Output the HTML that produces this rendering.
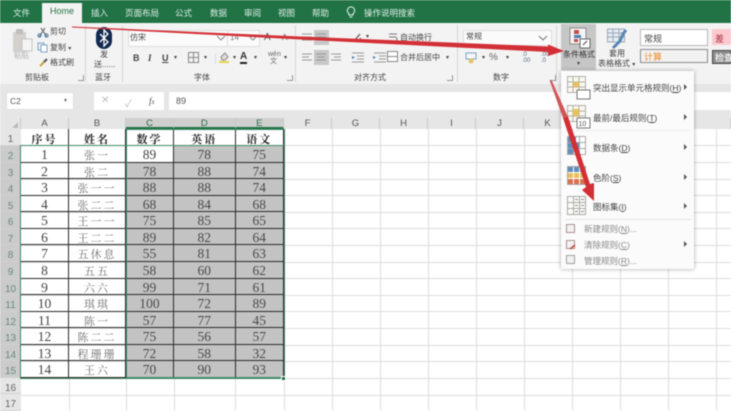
<!DOCTYPE html>
<html lang="zh">
<head>
<meta charset="utf-8">
<style>
html,body{margin:0;padding:0;background:#fff}
#p{position:relative;width:731px;height:411px;overflow:hidden;background:#fff;font-family:"Liberation Sans","Noto Sans CJK SC",sans-serif;color:#444;filter:blur(.55px)}
.a{position:absolute;white-space:nowrap}
.t{font-size:8px;line-height:10px}
.h{position:absolute;top:118px;height:11px;line-height:12px;font-size:9.5px;text-align:center;color:#555;background:#e6e6e6;border-right:1px solid #c8c8c8;box-sizing:border-box}
.h.s{background:#cfcfcf;border-bottom:2px solid #217346;color:#2a6a48}
#rows{position:absolute;left:0;top:129px;width:21px;display:grid;grid-template-rows:17px repeat(14,16.57px) 16.57px 16.57px;background:#e6e6e6}
#rows div{font:10px/21px "Liberation Sans",sans-serif;text-align:center;color:#666;box-shadow:inset 0 -1px 0 #d0d0d0;box-sizing:border-box}
#rows div.s{background:#cbcbcb;color:#6a8a78}
#g{position:absolute;left:21px;top:129px;width:263px;height:249px;display:grid;grid-template-columns:48px 57px 48px 61.5px 48.5px;grid-template-rows:17px repeat(14,16.57px)}
#g div{box-sizing:border-box;border-right:1px solid #2b2b2b;border-bottom:1px solid #2b2b2b;text-align:center;font:13.5px/18px "Liberation Serif","Noto Serif CJK SC",serif;color:#444;overflow:hidden;white-space:nowrap}
#g .b{font-weight:700;font-family:"Noto Serif CJK SC",serif;color:#222;font-size:11px;letter-spacing:2px;line-height:20px}
#g .n{font-family:"Noto Serif CJK SC",serif;font-size:11px;letter-spacing:2px;color:#707070}
#g .x{background:#c3c3c3;color:#4a4a4a}
.m{position:absolute;left:592px;font-size:8.5px;line-height:10px;color:#444;white-space:nowrap}
.ma{position:absolute;left:684px;width:0;height:0;border-left:3px solid #555;border-top:3px solid transparent;border-bottom:3px solid transparent}
.gl{position:absolute;background:#dcdcdc}
</style>
</head>
<body>
<div id="p">
<!-- title bar -->
<div class="a" style="left:0;top:0;width:731px;height:23px;background:#217346"></div>
<div class="a" style="left:42px;top:3px;width:40px;height:20px;background:#f3f3f3"></div>
<div class="a" style="left:13px;top:7px;font-size:8.5px;color:#dfeee6">文件</div>
<div class="a" style="left:50px;top:6px;font-size:9px;color:#217346">Home</div>
<div class="a" style="left:91px;top:7px;font-size:8.5px;color:#dfeee6">插入</div>
<div class="a" style="left:125px;top:7px;font-size:8.5px;color:#dfeee6">页面布局</div>
<div class="a" style="left:175px;top:7px;font-size:8.5px;color:#dfeee6">公式</div>
<div class="a" style="left:210px;top:7px;font-size:8.5px;color:#dfeee6">数据</div>
<div class="a" style="left:244px;top:7px;font-size:8.5px;color:#dfeee6">审阅</div>
<div class="a" style="left:278px;top:7px;font-size:8.5px;color:#dfeee6">视图</div>
<div class="a" style="left:312px;top:7px;font-size:8.5px;color:#dfeee6">帮助</div>
<svg class="a" style="left:346px;top:6px" width="10" height="12" viewBox="0 0 10 12"><path d="M5 1a3.6 3.6 0 0 0-2 6.600V9h4V7.600A3.600 3.600 0 0 0 5 1zM3.500 11h3" fill="none" stroke="#e6f2ec"/></svg>
<div class="a" style="left:364px;top:7px;font-size:8.5px;color:#dfeee6">操作说明搜索</div>

<!-- ribbon -->
<div class="a" style="left:0;top:23px;width:731px;height:61px;background:#f3f3f3"></div>
<div class="a" style="left:0;top:84px;width:731px;height:34px;background:#e6e6e6"></div>

<!-- clipboard -->
<svg class="a" style="left:12px;top:27px" width="22" height="30" viewBox="0 0 22 30"><rect x="1" y="5" width="13" height="20" fill="#d4d0cc"/><rect x="4" y="2" width="7" height="5" fill="#bdbdbd"/><rect x="10" y="12" width="10" height="12" fill="#f4f4f4" stroke="#c4c4c4"/></svg>
<div class="a" style="left:14px;top:50px;font-size:7.5px;color:#b0b0b0">粘贴</div>
<svg class="a" style="left:37px;top:26px" width="12" height="12" viewBox="0 0 12 12"><path d="M2 11 8 2M10 11 4 2" stroke="#777" stroke-width="1.200" fill="none"/><circle cx="2.500" cy="9.500" r="1.600" fill="none" stroke="#4a7fb0"/><circle cx="9.500" cy="9.500" r="1.600" fill="none" stroke="#4a7fb0"/></svg>
<div class="a t" style="left:50px;top:27px">剪切</div>
<svg class="a" style="left:37px;top:42px" width="12" height="11" viewBox="0 0 12 11"><rect x="1" y="1" width="6" height="7" fill="#eef3f8" stroke="#7ea3c4"/><rect x="4" y="3" width="6" height="7" fill="#fff" stroke="#7ea3c4"/></svg>
<div class="a t" style="left:50px;top:43px">复制 <span style="font-size:6px">▾</span></div>
<svg class="a" style="left:39px;top:58px" width="10" height="9" viewBox="0 0 10 9"><path d="M1 8 5 4" stroke="#c9a040" stroke-width="2"/><path d="M5 4 8 1" stroke="#555" stroke-width="2"/></svg>
<div class="a t" style="left:50px;top:58px">格式刷</div>
<div class="a t" style="left:25px;top:73px">剪贴板</div>
<div class="a" style="left:78px;top:75px;width:5px;height:5px;border:1px solid #999;border-width:0 1px 1px 0"></div>

<!-- bluetooth -->
<div class="a" style="left:85px;top:25px;width:1px;height:57px;background:#d6d6d6"></div>
<svg class="a" style="left:95px;top:27px" width="18" height="22" viewBox="0 0 18 22"><rect x="1" y="0" width="16" height="22" rx="8" fill="#10294f"/><path d="M5 7l8 8-4 4V3l4 4-8 8" fill="none" stroke="#fff" stroke-width="1.300"/></svg>
<div class="a t" style="left:100px;top:50px">发</div>
<div class="a t" style="left:94px;top:60px">送......</div>
<div class="a t" style="left:95px;top:73px">蓝牙</div>
<div class="a" style="left:122px;top:25px;width:1px;height:57px;background:#d6d6d6"></div>

<!-- font -->
<div class="a" style="left:128px;top:30px;width:98px;height:15px;background:#fbfbfb;border:1px solid #dedede"></div>
<div class="a t" style="left:130px;top:33px">仿宋</div>
<div class="a" style="left:227px;top:30px;width:31px;height:15px;background:#fbfbfb;border:1px solid #dedede"></div>
<div class="a t" style="left:230px;top:33px;color:#777">14</div>
<svg class="a" style="left:216px;top:35px" width="46" height="6" viewBox="0 0 46 6"><path d="M1 1l4 4 4-4M33 1l4 4 4-4" fill="none" stroke="#888"/></svg>
<div class="a" style="left:264px;top:32px;font-size:10px;color:#555">A</div>
<div class="a" style="left:282px;top:33px;font-size:8px;color:#555">A</div>
<div class="a" style="left:133px;top:53px;font:700 9px 'Liberation Sans';color:#444">B</div>
<div class="a" style="left:148px;top:53px;font:italic 700 9px 'Liberation Serif';color:#444">I</div>
<div class="a" style="left:162px;top:53px;font:700 9px 'Liberation Sans';color:#444;text-decoration:underline">U</div>
<div class="a" style="left:174px;top:54px;font-size:6px">▾</div>
<svg class="a" style="left:188px;top:52px" width="11" height="11"><path d="M.5.5h10v10H.5zM5.500.5v10M.5 5.500h10" fill="none" stroke="#888"/></svg>
<div class="a" style="left:204px;top:54px;font-size:6px">▾</div>
<div class="a" style="left:215px;top:53px;width:1px;height:11px;background:#ddd"></div>
<svg class="a" style="left:218px;top:51px" width="12" height="13"><path d="M3 6l4-4 3 4-3 3H4z" fill="#ddd" stroke="#888"/><rect x="1" y="10" width="10" height="2" fill="#e8d34a"/></svg>
<div class="a" style="left:233px;top:54px;font-size:6px">▾</div>
<div class="a" style="left:240px;top:51px;font:700 10px 'Liberation Sans';color:#333;border-bottom:2px solid #222;line-height:11px">A</div>
<div class="a" style="left:254px;top:54px;font-size:6px">▾</div>
<div class="a" style="left:268px;top:51px;font-size:7px;line-height:7px;color:#666">wén<br>&nbsp;文</div>
<div class="a" style="left:284px;top:54px;font-size:6px">▾</div>
<div class="a t" style="left:194px;top:73px">字体</div>
<div class="a" style="left:287px;top:75px;width:5px;height:5px;border:1px solid #999;border-width:0 1px 1px 0"></div>
<div class="a" style="left:295px;top:25px;width:1px;height:57px;background:#d6d6d6"></div>

<!-- align -->
<div class="a" style="left:314px;top:30px;width:15px;height:15px;background:#c8c8c8"></div>
<svg class="a" style="left:302px;top:32px" width="26" height="11"><path d="M0 2h10M0 5h10M0 8h10M14 2h10M14 5h10M14 8h10" stroke="#999"/></svg>
<svg class="a" style="left:352px;top:31px" width="13" height="12"><path d="M2 10 8 3" stroke="#8a6a70" stroke-width="1.500"/><path d="M6 10l3-3" stroke="#666"/></svg>
<div class="a" style="left:366px;top:33px;font-size:6px">▾</div>
<svg class="a" style="left:388px;top:32px" width="11" height="11"><path d="M1 2h8M1 5h6a2 2 0 0 1 0 4H4" fill="none" stroke="#777"/></svg>
<div class="a t" style="left:400px;top:33px">自动换行</div>
<div class="a" style="left:314px;top:50px;width:15px;height:15px;background:#c8c8c8"></div>
<svg class="a" style="left:302px;top:52px" width="40" height="11"><path d="M0 2h10M0 5h7M0 8h10M14 2h10M15 5h8M14 8h10M29 2h10M32 5h7M29 8h10" stroke="#999"/></svg>
<svg class="a" style="left:351px;top:52px" width="38" height="11"><path d="M1 1h12M6 4h7M6 7h7M1 10h12M23 1h12M28 4h7M28 7h7M23 10h12" stroke="#999"/><path d="M1 4l3 1.500-3 1.500zM22 4l3 1.500-3 1.500z" fill="#4a7fb0"/></svg>
<svg class="a" style="left:387px;top:51px" width="12" height="12"><path d="M.5.5h10v10H.5zM.5 5.500h10" fill="#fff" stroke="#888"/></svg>
<div class="a t" style="left:400px;top:53px">合并后居中</div>
<div class="a" style="left:446px;top:54px;font-size:6px">▾</div>
<div class="a t" style="left:354px;top:73px">对齐方式</div>
<div class="a" style="left:447px;top:75px;width:5px;height:5px;border:1px solid #999;border-width:0 1px 1px 0"></div>
<div class="a" style="left:457px;top:25px;width:1px;height:57px;background:#d6d6d6"></div>

<!-- number -->
<div class="a" style="left:463px;top:30px;width:87px;height:14px;background:#fbfbfb;border:1px solid #dedede"></div>
<div class="a t" style="left:466px;top:32px">常规</div>
<svg class="a" style="left:538px;top:35px" width="10" height="6"><path d="M1 1l4 4 4-4" fill="none" stroke="#777"/></svg>
<svg class="a" style="left:465px;top:52px" width="13" height="12"><rect x="1" y="1" width="10" height="6" fill="#f6f6f6" stroke="#7ea3c4"/><circle cx="6" cy="9" r="2.500" fill="#e4c460"/></svg>
<div class="a" style="left:482px;top:54px;font-size:6px">▾</div>
<div class="a" style="left:489px;top:52px;font-size:10px;color:#666">%</div>
<div class="a" style="left:506px;top:54px;font-size:6px">▾</div>
<div class="a" style="left:522px;top:52px;font-size:6px;line-height:6px;color:#5a6b80">.0<br>.00</div>
<div class="a" style="left:541px;top:52px;font-size:6px;line-height:6px;color:#5a6b80">.00<br>.0</div>
<div class="a t" style="left:493px;top:73px">数字</div>
<div class="a" style="left:550px;top:75px;width:5px;height:5px;border:1px solid #999;border-width:0 1px 1px 0"></div>
<div class="a" style="left:556px;top:25px;width:1px;height:57px;background:#d6d6d6"></div>

<!-- styles -->
<div class="a" style="left:561px;top:24px;width:35px;height:46px;background:#c6c6c6"></div>
<svg class="a" style="left:569px;top:27px" width="22" height="22" viewBox="0 0 22 22"><rect x="1" y="1" width="16" height="16" fill="#f4f4f4" stroke="#8a8a8a"/><rect x="5" y="3" width="5" height="4" fill="#c0504d"/><rect x="5" y="8" width="7" height="3" fill="#4a7fb0"/><rect x="5" y="12" width="4" height="3" fill="#c0504d"/><rect x="11" y="12" width="10" height="9" fill="#fff" stroke="#666"/><path d="M14 18l4-4" stroke="#444"/></svg>
<div class="a" style="left:563px;top:49px;font-size:8px;color:#333">条件格式</div>
<div class="a" style="left:577px;top:60px;font-size:6px">▾</div>
<svg class="a" style="left:607px;top:28px" width="22" height="22" viewBox="0 0 22 22"><path d="M.5 1h17v13H.5zM6 1v13M12 1v13M.5 5h17M.5 9h17" fill="#e6ecf2" stroke="#9aa8b8"/><path d="M6 20l7-7 3-7 3-4" stroke="#5a86b4" stroke-width="3" fill="none"/></svg>
<div class="a t" style="left:609px;top:49px">套用</div>
<div class="a t" style="left:598px;top:59px">表格格式 <span style="font-size:6px">▾</span></div>
<div class="a" style="left:640px;top:29px;width:68px;height:17px;background:#fff;border:1px solid #b8b8b8;box-sizing:border-box"></div>
<div class="a" style="left:644px;top:32px;font-size:9px">常规</div>
<div class="a" style="left:640px;top:49px;width:68px;height:14px;background:#f2f2f2;border:1px solid #8a8a8a;box-sizing:border-box"></div>
<div class="a" style="left:644px;top:50px;font-size:9px;color:#f08a24">计算</div>
<div class="a" style="left:712px;top:29px;width:19px;height:16px;background:#fbc9cf"></div>
<div class="a" style="left:715px;top:32px;font-size:9px;color:#a8303c">差</div>
<div class="a" style="left:712px;top:50px;width:19px;height:14px;background:#8d8d8d;border:1px solid #444;box-sizing:border-box"></div>
<div class="a" style="left:715px;top:51px;font-size:9px;color:#eee;font-weight:700">检查</div>

<!-- formula bar -->
<div class="a" style="left:6px;top:92px;width:68px;height:18px;background:#fff;border:1px solid #e0e0e0;box-sizing:border-box"></div>
<div class="a" style="left:10px;top:96px;font-size:8.5px;color:#555">C2</div>
<div class="a" style="left:64px;top:97px;font-size:6px;color:#666">▾</div>
<div class="a" style="left:94px;top:92px;width:70px;height:18px;background:#fff"></div>
<div class="a" style="left:101px;top:95px;font-size:10px;color:#bbb">✕</div>
<div class="a" style="left:125px;top:95px;font-size:10px;color:#bbb">✓</div>
<div class="a" style="left:149px;top:96px;font:italic 9px 'Liberation Serif';color:#555">f<span style="font-size:7px">x</span></div>
<div class="a" style="left:169px;top:92px;width:562px;height:18px;background:#fff"></div>
<div class="a" style="left:176px;top:96px;font-size:9px;color:#555">89</div>

<!-- column headers -->
<div class="h" style="left:0;width:21px"><span style="display:block;position:absolute;right:2px;bottom:1px;width:0;height:0;border-left:6px solid transparent;border-bottom:6px solid #bbb"></span></div>
<div class="h" style="left:21px;width:48px">A</div>
<div class="h" style="left:69px;width:57px">B</div>
<div class="h s" style="left:126px;width:48px">C</div>
<div class="h s" style="left:174px;width:61.500px">D</div>
<div class="h s" style="left:235.500px;width:48.500px">E</div>
<div class="h" style="left:284px;width:48px">F</div>
<div class="h" style="left:332px;width:48px">G</div>
<div class="h" style="left:380px;width:48px">H</div>
<div class="h" style="left:428px;width:48px">I</div>
<div class="h" style="left:476px;width:48px">J</div>
<div class="h" style="left:524px;width:48px">K</div>
<div class="h" style="left:572px;width:48px"></div>
<div class="h" style="left:620px;width:48px"></div>
<div class="h" style="left:668px;width:63px"></div>

<!-- gridlines -->
<div class="gl" style="left:332px;top:129px;width:1px;height:282px"></div>
<div class="gl" style="left:380px;top:129px;width:1px;height:282px"></div>
<div class="gl" style="left:428px;top:129px;width:1px;height:282px"></div>
<div class="gl" style="left:476px;top:129px;width:1px;height:282px"></div>
<div class="gl" style="left:524px;top:129px;width:1px;height:282px"></div>
<div class="gl" style="left:572px;top:129px;width:1px;height:282px"></div>
<div class="gl" style="left:620px;top:129px;width:1px;height:282px"></div>
<div class="gl" style="left:668px;top:129px;width:1px;height:282px"></div>
<div class="gl" style="left:716px;top:129px;width:1px;height:282px"></div>
<div class="gl" style="left:284px;top:129px;width:1px;height:282px"></div>
<div class="gl" style="left:69px;top:378px;width:1px;height:33px"></div>
<div class="gl" style="left:126px;top:378px;width:1px;height:33px"></div>
<div class="gl" style="left:174px;top:378px;width:1px;height:33px"></div>
<div class="gl" style="left:235px;top:378px;width:1px;height:33px"></div>
<div class="gl" style="left:21px;top:145px;width:710px;height:1px"></div>
<div class="gl" style="left:21px;top:162px;width:710px;height:1px"></div>
<div class="gl" style="left:21px;top:179px;width:710px;height:1px"></div>
<div class="gl" style="left:21px;top:195px;width:710px;height:1px"></div>
<div class="gl" style="left:21px;top:212px;width:710px;height:1px"></div>
<div class="gl" style="left:21px;top:228px;width:710px;height:1px"></div>
<div class="gl" style="left:21px;top:245px;width:710px;height:1px"></div>
<div class="gl" style="left:21px;top:262px;width:710px;height:1px"></div>
<div class="gl" style="left:21px;top:278px;width:710px;height:1px"></div>
<div class="gl" style="left:21px;top:295px;width:710px;height:1px"></div>
<div class="gl" style="left:21px;top:311px;width:710px;height:1px"></div>
<div class="gl" style="left:21px;top:328px;width:710px;height:1px"></div>
<div class="gl" style="left:21px;top:345px;width:710px;height:1px"></div>
<div class="gl" style="left:21px;top:361px;width:710px;height:1px"></div>
<div class="gl" style="left:21px;top:378px;width:710px;height:1px"></div>
<div class="gl" style="left:21px;top:395px;width:710px;height:1px"></div>

<!-- row headers -->
<div id="rows">
<div>1</div><div class="s">2</div><div class="s">3</div><div class="s">4</div><div class="s">5</div><div class="s">6</div><div class="s">7</div><div class="s">8</div><div class="s">9</div><div class="s">10</div><div class="s">11</div><div class="s">12</div><div class="s">13</div><div class="s">14</div><div class="s">15</div><div>16</div><div>17</div>
</div>

<!-- table -->
<div id="g">
<div class="b">序号</div><div class="b">姓名</div><div class="b">数学</div><div class="b">英语</div><div class="b">语文</div>
<div>1</div><div class="n">张一</div><div>89</div><div class="x">78</div><div class="x">75</div>
<div>2</div><div class="n">张二</div><div class="x">78</div><div class="x">88</div><div class="x">74</div>
<div>3</div><div class="n">张一一</div><div class="x">88</div><div class="x">88</div><div class="x">74</div>
<div>4</div><div class="n">张二二</div><div class="x">68</div><div class="x">84</div><div class="x">68</div>
<div>5</div><div class="n">王一一</div><div class="x">75</div><div class="x">85</div><div class="x">65</div>
<div>6</div><div class="n">王二二</div><div class="x">89</div><div class="x">82</div><div class="x">64</div>
<div>7</div><div class="n">五休息</div><div class="x">55</div><div class="x">81</div><div class="x">63</div>
<div>8</div><div class="n">五五</div><div class="x">58</div><div class="x">60</div><div class="x">62</div>
<div>9</div><div class="n">六六</div><div class="x">99</div><div class="x">71</div><div class="x">61</div>
<div>10</div><div class="n">琪琪</div><div class="x">100</div><div class="x">72</div><div class="x">89</div>
<div>11</div><div class="n">陈一</div><div class="x">57</div><div class="x">77</div><div class="x">45</div>
<div>12</div><div class="n">陈二二</div><div class="x">75</div><div class="x">56</div><div class="x">57</div>
<div>13</div><div class="n">程珊珊</div><div class="x">72</div><div class="x">58</div><div class="x">32</div>
<div>14</div><div class="n">王六</div><div class="x">70</div><div class="x">90</div><div class="x">93</div>
</div>
<!-- selection borders -->
<div class="a" style="left:20px;top:145px;width:265px;height:234px;border:1px solid #3f8a68;box-sizing:border-box"></div>
<div class="a" style="left:126px;top:129px;width:159px;height:250px;border:1px solid #3f8a68;border-bottom-width:2px;box-sizing:border-box"></div>
<div class="a" style="left:281px;top:376px;width:5px;height:5px;background:#217346;border:1px solid #fff;box-sizing:border-box"></div>

<!-- dropdown menu -->
<div class="a" style="left:561px;top:71px;width:133px;height:198px;background:#fbfbfb;box-shadow:0 0 4px rgba(0,0,0,.35)"></div>
<svg class="a" style="left:567px;top:76px" width="24" height="24" viewBox="0 0 24 24"><path d="M.5.500h18v16H.5zM.500 6h18M.500 11h18M6 .500v16M12 .500v16" fill="#fbf7ea" stroke="#b0b0b0"/><rect x="6" y="6" width="6" height="5" fill="#e6c25c"/><rect x="10" y="14" width="13" height="9" fill="#fff" stroke="#777"/></svg>
<div class="m" style="left:593px;top:83px">突出显示单元格规则(<u>H</u>)</div><div class="ma" style="top:84px"></div>
<svg class="a" style="left:567px;top:105px" width="24" height="24" viewBox="0 0 24 24"><path d="M.5.500h18v16H.5zM.500 6h18M.500 11h18M6 .500v16M12 .500v16" fill="#fbf7ea" stroke="#b0b0b0"/><rect x="6" y="4" width="6" height="7" fill="#e6c25c"/><rect x="10" y="13" width="13" height="10" fill="#fff" stroke="#777"/><text x="11.500" y="21" font-size="7" fill="#555" font-family="Liberation Sans">10</text></svg>
<div class="m" style="left:593px;top:113px">最前/最后规则(<u>T</u>)</div><div class="ma" style="top:114px"></div>
<div class="a" style="left:565px;top:130px;width:126px;height:1px;background:#eee"></div>
<svg class="a" style="left:567px;top:136px" width="20" height="20" viewBox="0 0 20 20"><path d="M.5.500h18v18H.5zM.500 6.500h18M.500 12.500h18M6.500.500v18M12.500.500v18" fill="#fff" stroke="#a8a8a8"/><rect x="1" y="1" width="8" height="5" fill="#5f8dbc"/><rect x="1" y="7" width="11" height="5" fill="#5f8dbc"/><rect x="1" y="13" width="5" height="5" fill="#5f8dbc"/></svg>
<div class="m" style="left:593px;top:143px">数据条(<u>D</u>)</div><div class="ma" style="top:144px"></div>
<svg class="a" style="left:567px;top:166px" width="20" height="20" viewBox="0 0 20 20"><rect x=".5" y=".5" width="18" height="18" fill="#fff" stroke="#a8a8a8"/><rect x="1" y="1" width="17" height="5" fill="#5f8dbc"/><rect x="1" y="7" width="17" height="5" fill="#e8c05a"/><rect x="1" y="13" width="17" height="5" fill="#d9704f"/><path d="M6.500 1v17M12.500 1v17" stroke="#fff"/></svg>
<div class="m" style="left:593px;top:173px">色阶(<u>S</u>)</div><div class="ma" style="top:174px"></div>
<svg class="a" style="left:567px;top:196px" width="20" height="20" viewBox="0 0 20 20"><path d="M.5.500h18v18H.5zM.500 6.500h18M.500 12.500h18M6.500.500v18M12.500.500v18" fill="#fdfdf8" stroke="#a8a8a8"/><path d="M8 3.500h3M14 3.500h3M8 9.500h3M14 9.500h3M8 15.500h3M14 15.500h3" stroke="#888"/></svg>
<div class="m" style="left:593px;top:202px">图标集(<u>I</u>)</div><div class="ma" style="top:203px"></div>
<div class="a" style="left:565px;top:219px;width:126px;height:1px;background:#e4e4e4"></div>
<svg class="a" style="left:566px;top:224px" width="10" height="10"><rect x=".5" y=".5" width="8" height="8" fill="#f2f2f2" stroke="#b09090"/></svg>
<div class="m" style="left:584px;top:224px;color:#888">新建规则(<u>N</u>)...</div>
<svg class="a" style="left:566px;top:240px" width="11" height="11"><rect x=".5" y=".5" width="8" height="8" fill="#f2f2f2" stroke="#b09090"/><path d="M4 9l5-4" stroke="#d0483c" stroke-width="1.500"/></svg>
<div class="m" style="left:584px;top:240px;color:#888">清除规则(<u>C</u>)</div><div class="ma" style="top:241px"></div>
<svg class="a" style="left:566px;top:255px" width="10" height="10"><rect x=".5" y=".5" width="8" height="8" fill="#f2f2f2" stroke="#a0a0a0"/></svg>
<div class="m" style="left:584px;top:256px;color:#888">管理规则(<u>R</u>)...</div>

<!-- red arrows -->
<svg class="a" style="left:0;top:0" width="731" height="411" viewBox="0 0 731 411">
<polygon points="72,26.500 300,36.500 548,46.500 548,44.500 564,51 548,56 548,52 300,39.500 72,27.500" fill="#d32f36"/>
<polygon points="549.500,80 551.500,80 568,117 563,118" fill="#d2565a"/>
<polygon points="563,118 568,116.500 590,184 594,183 594,201 582,190 586,187" fill="#d32f36"/>
</svg>
</div>
</body>
</html>
